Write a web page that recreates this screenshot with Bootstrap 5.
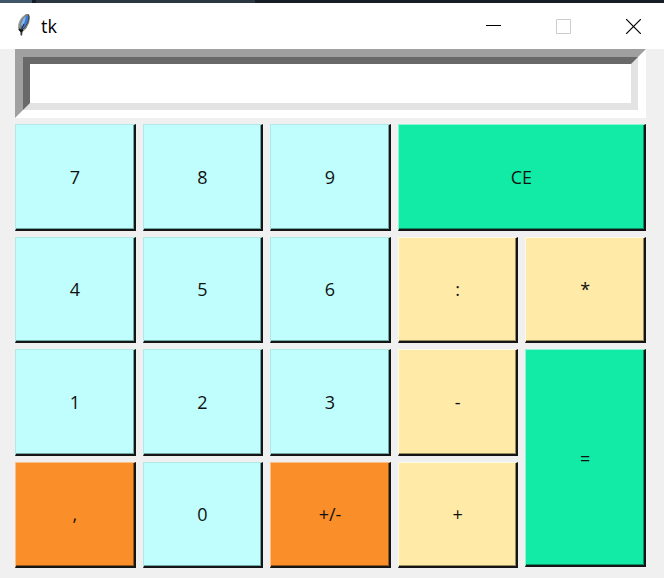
<!DOCTYPE html>
<html lang="en">
<head>
<meta charset="utf-8">
<meta name="viewport" content="width=device-width, initial-scale=1">
<title>tk</title>
<link href="https://cdn.jsdelivr.net/npm/bootstrap@5.3.0/dist/css/bootstrap.min.css" rel="stylesheet">
<style>
  body { background: #f0f0f0; color: #000; font-family: "Open Sans", "Noto Sans", sans-serif; font-size: 18px; }
  .desktop-strip { height: 3px; background: #161d25; }
  .strip-start { width: 32px; background: #42566a; }
  .strip-mid { width: 223px; background: #2a3642; border-left: 4px solid #161d25; }
  .title-bar { height: 46px; background: #fff; padding-left: 16px; }
  .title-text { font-size: 18px; line-height: 24px; font-weight: 400; margin-left: 9px; }
  .win-btn { width: 70px; height: 46px; border: 0; padding: 0 0 0 28px; background: transparent; color: #000; }
  .win-btn:disabled { color: #ccc; }
  .win-btn.close-btn { width: 66px; }
  .calc { padding: 0 18px 10px 15px; }
  .screen { border: 8px solid; border-color: #a0a0a0 #fff #fff #a0a0a0; margin-bottom: 6px; }
  .screen-input { height: 53px; border: 7px solid; border-color: #696969 #e3e3e3 #e3e3e3 #696969; background: #fff; padding: 0 4px; text-align: right; outline: 0; }
  .keys { display: grid; grid-template-columns: repeat(5, minmax(0, 1fr)); grid-template-rows: repeat(4, minmax(60px, 1fr)); gap: 6px 7px; }
  .key { --face: #bffefc; --light: #b3e8e8; --shade: #6fa8a6; background: var(--face); color: #111; border: 1px solid; border-width: 1px 2px 2px 1px; border-color: var(--light) #151515 #151515 var(--light); box-shadow: inset -1px -1px var(--shade); padding: 0; font-size: 18px; line-height: 24px; }
  .key:active { border-color: #151515 var(--light) var(--light) #151515; }
  .key-op { --face: #ffeaa7; --light: #fffbe6; --shade: #968a62; }
  .key-sign { --face: #fa8e28; --light: #fbc08a; --shade: #96551a; }
  .key-main { --face: #12eba6; --light: #8df5d3; --shade: #0b8d64; }
  .key-wide { grid-column: span 2; }
  .key-tall { grid-row: span 2; margin-bottom: 1px; }
</style>
</head>
<body>
<div class="min-vh-100 d-flex flex-column">
  <div class="desktop-strip d-flex"><div class="strip-start"></div><div class="strip-mid"></div></div>
  <header class="title-bar d-flex align-items-center">
    <svg width="16" height="26" viewBox="0 0 16 26" aria-hidden="true">
      <path d="M13 1 L10 1 L6 4 L3 9 L2 15 L4 18 L5 23 L6 23 L7 18 L10 16 L13 10 L14 5 Z" fill="#85827b"/>
      <path d="M12 2 L9 4 L6 8 L5 13 L5 17 L8 15 L11 11 L12 7 Z" fill="#3c7cd0"/>
      <path d="M10 3 L7 6 L5 11 L6 14 L9 8 Z" fill="#83b5ea"/>
      <path d="M12 2 L13 3 L12 9 L9 14 L6 17" fill="none" stroke="#3a465a"/>
      <path d="M8 11 L6 15 L5 22" fill="none" stroke="#222"/>
      <path d="M9 2 L5 6 L3 11 L3 16" fill="none" stroke="#aaa69f"/>
      <path d="M3 16 L5 18 L7 17" fill="none" stroke="#151515" stroke-width="2"/>
    </svg>
    <h1 class="title-text mb-0 me-auto">tk</h1>
    <button class="win-btn" type="button" aria-label="Minimize"><svg class="d-block" width="15" height="15" viewBox="0 0 15 15"><path d="M0 6.5H15" stroke="currentColor"/></svg></button>
    <button class="win-btn" type="button" aria-label="Maximize" disabled><svg class="d-block" width="15" height="15" viewBox="0 0 15 15"><path d="M.5 .5H14.5V14.5H.5Z" fill="none" stroke="currentColor"/></svg></button>
    <button class="win-btn close-btn" type="button" aria-label="Close"><svg class="d-block" width="15" height="15" viewBox="0 0 15 15"><path d="M0 0L15 15M15 0L0 15" stroke="currentColor" stroke-width="1.2"/></svg></button>
  </header>
  <main class="calc flex-grow-1 d-flex flex-column">
    <div class="screen">
      <input class="screen-input d-block w-100" type="text" aria-label="Display">
    </div>
    <div class="keys flex-grow-1">
      <button class="key" type="button">7</button>
      <button class="key" type="button">8</button>
      <button class="key" type="button">9</button>
      <button class="key key-main key-wide" type="button">CE</button>
      <button class="key" type="button">4</button>
      <button class="key" type="button">5</button>
      <button class="key" type="button">6</button>
      <button class="key key-op" type="button">:</button>
      <button class="key key-op" type="button">*</button>
      <button class="key" type="button">1</button>
      <button class="key" type="button">2</button>
      <button class="key" type="button">3</button>
      <button class="key key-op" type="button">-</button>
      <button class="key key-main key-tall" type="button">=</button>
      <button class="key key-sign" type="button">,</button>
      <button class="key" type="button">0</button>
      <button class="key key-sign" type="button">+/-</button>
      <button class="key key-op" type="button">+</button>
    </div>
  </main>
</div>
<script src="https://cdn.jsdelivr.net/npm/bootstrap@5.3.0/dist/js/bootstrap.bundle.min.js"></script>
</body>
</html>
